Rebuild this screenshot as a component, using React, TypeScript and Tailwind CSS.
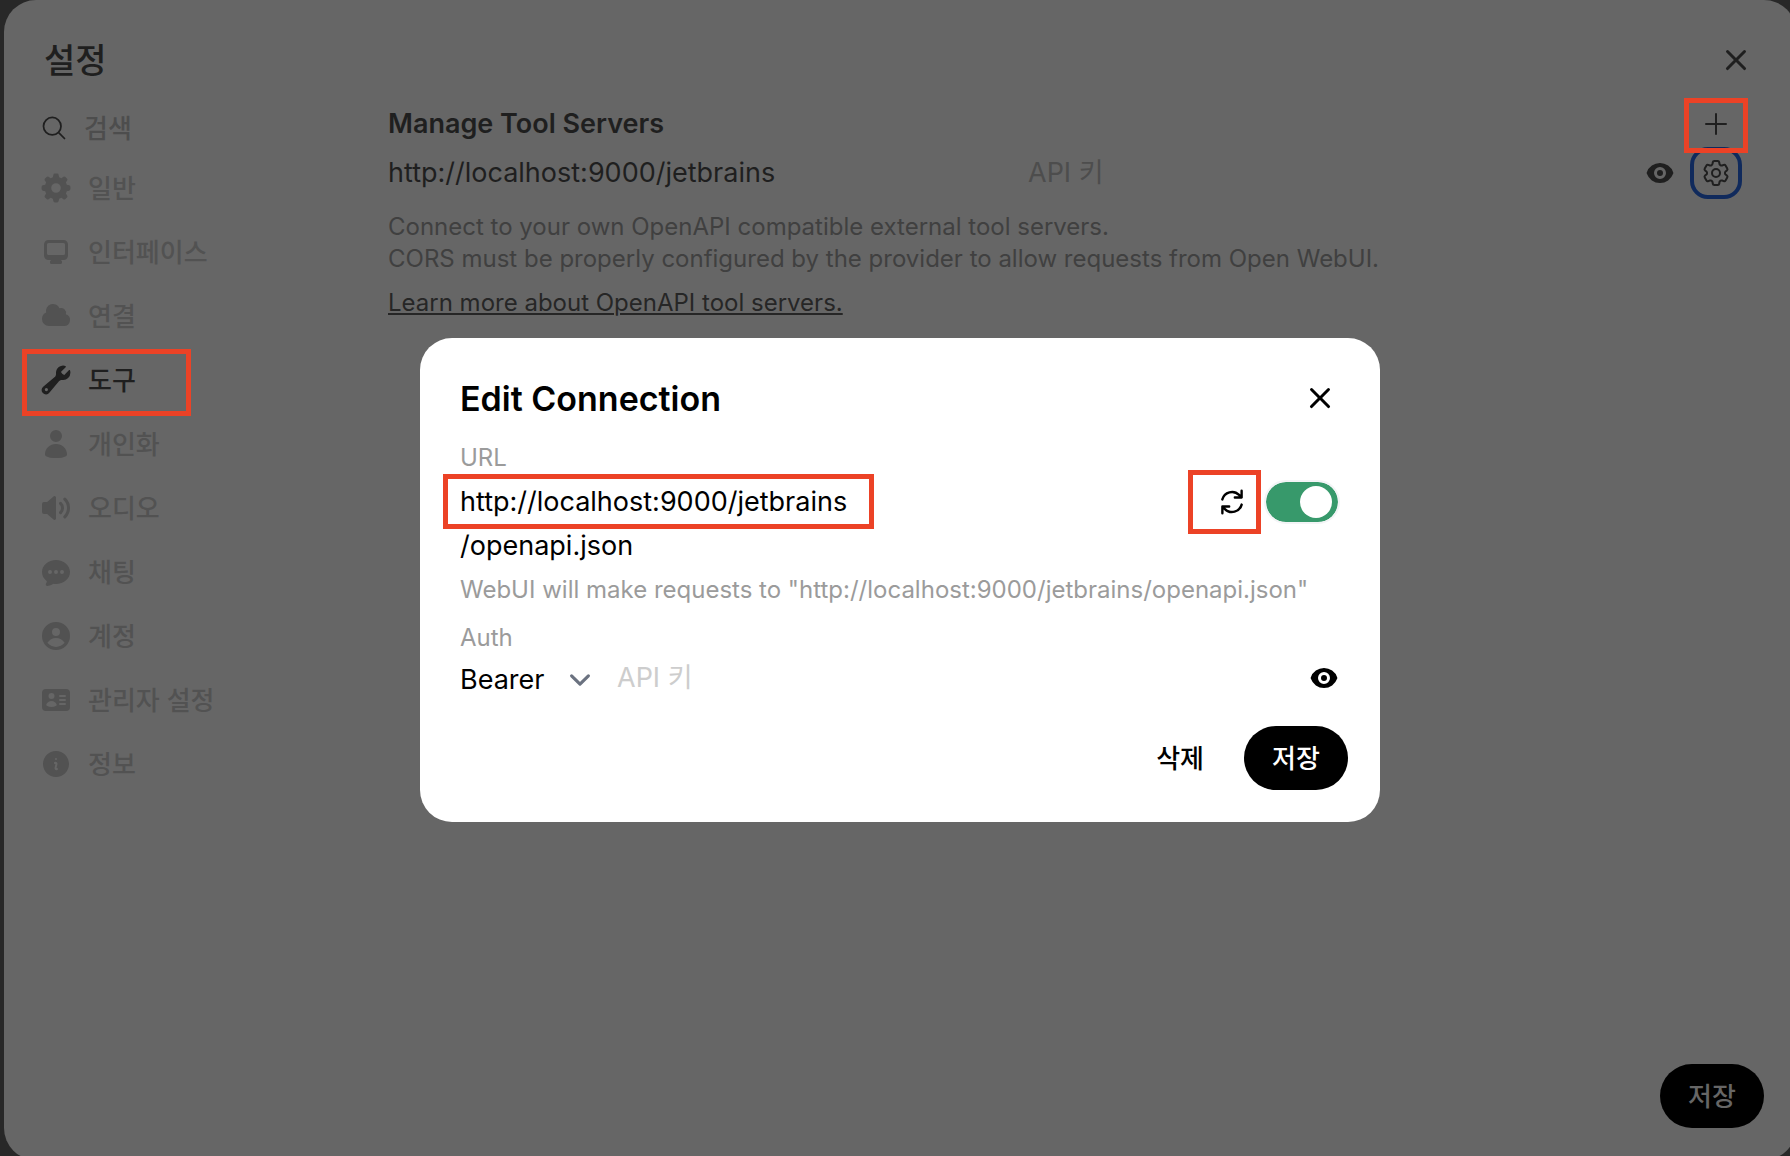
import React, { useState } from 'react';
import {
  HiIdentification,
  HiInformationCircle,
  HiMiniArrowPath,
  HiMiniCog8Tooth,
  HiMiniWrench,
  HiMiniXMark,
  HiOutlineCog6Tooth,
  HiOutlineMagnifyingGlass,
  HiOutlinePlus,
} from 'react-icons/hi2';

const ICONS = {
  interface:
    'M2 4.25A2.25 2.25 0 0 1 4.25 2h7.5A2.25 2.25 0 0 1 14 4.25v5.5A2.25 2.25 0 0 1 11.75 12h-1.312c.1.128.21.248.328.36a.75.75 0 0 1 .234.545v.345a.75.75 0 0 1-.75.75h-4.5a.75.75 0 0 1-.75-.75v-.345a.75.75 0 0 1 .234-.545c.118-.111.228-.232.328-.36H4.25A2.25 2.25 0 0 1 2 9.75v-5.5Zm2.25-.75a.75.75 0 0 0-.75.75v4.5c0 .414.336.75.75.75h7.5a.75.75 0 0 0 .75-.75v-4.5a.75.75 0 0 0-.75-.75h-7.5Z',
  cloud:
    'M1 9.5A3.5 3.5 0 0 0 4.5 13H12a3 3 0 0 0 .917-5.857 2.503 2.503 0 0 0-3.198-3.019 3.5 3.5 0 0 0-6.628 2.171A3.5 3.5 0 0 0 1 9.5Z',
  user: 'M8 7a3 3 0 1 0 0-6 3 3 0 0 0 0 6ZM2.5 13.1C2.5 10.3 4.9 8 8 8s5.5 2.3 5.5 5.1c0 .4-.2.8-.5 1A9.9 9.9 0 0 1 8 15a9.9 9.9 0 0 1-5-.9c-.3-.2-.5-.6-.5-1Z',
  speaker:
    'M7.557 2.066A.75.75 0 0 1 8 2.75v10.5a.75.75 0 0 1-1.248.56L3.59 11H2a1 1 0 0 1-1-1V6a1 1 0 0 1 1-1h1.59l3.162-2.81a.75.75 0 0 1 .805-.124ZM12.95 3.05a.75.75 0 1 0-1.06 1.06 5.5 5.5 0 0 1 0 7.78.75.75 0 1 0 1.06 1.06 7 7 0 0 0 0-9.9ZM10.828 5.172a.75.75 0 1 0-1.06 1.06 2.5 2.5 0 0 1 0 3.536.75.75 0 1 0 1.06 1.06 4 4 0 0 0 0-5.656Z',
  chat: 'M8 2C4.262 2 1 4.57 1 8c0 1.86.98 3.486 2.455 4.566a3.472 3.472 0 0 1-.469 1.26.75.75 0 0 0 .713 1.14 6.961 6.961 0 0 0 3.06-1.06c.403.062.818.094 1.241.094 3.738 0 7-2.57 7-6s-3.262-6-7-6ZM5 9a1 1 0 1 0 0-2 1 1 0 0 0 0 2Zm7-1a1 1 0 1 1-2 0 1 1 0 0 1 2 0ZM8 9a1 1 0 1 0 0-2 1 1 0 0 0 0 2Z',
  account:
    'M15 8A7 7 0 1 1 1 8a7 7 0 0 1 14 0Zm-5-2a2 2 0 1 1-4 0 2 2 0 0 1 4 0ZM8 9c-1.825 0-3.422.977-4.295 2.437A5.49 5.49 0 0 0 8 13.5a5.49 5.49 0 0 0 4.294-2.063A4.997 4.997 0 0 0 8 9Z',
  eye: 'M8 9.5a1.5 1.5 0 1 0 0-3 1.5 1.5 0 0 0 0 3ZM1.38 8.28a.87.87 0 0 1 0-.566 7.003 7.003 0 0 1 13.238.006.87.87 0 0 1 0 .566A7.003 7.003 0 0 1 1.379 8.28ZM11 8a3 3 0 1 1-6 0 3 3 0 0 1 6 0Z',
};

function SolidIcon({ name }: { name: keyof typeof ICONS }) {
  return (
    <svg viewBox="0 0 16 16" fill="currentColor" className="size-8" aria-hidden="true">
      <path fillRule="evenodd" clipRule="evenodd" d={ICONS[name]} />
    </svg>
  );
}

const TABS = [
  { id: 'general', label: '일반', icon: <HiMiniCog8Tooth className="size-8" /> },
  { id: 'interface', label: '인터페이스', icon: <SolidIcon name="interface" /> },
  { id: 'connections', label: '연결', icon: <SolidIcon name="cloud" /> },
  { id: 'tools', label: '도구', icon: <HiMiniWrench className="size-8" /> },
  { id: 'personalization', label: '개인화', icon: <SolidIcon name="user" /> },
  { id: 'audio', label: '오디오', icon: <SolidIcon name="speaker" /> },
  { id: 'chats', label: '채팅', icon: <SolidIcon name="chat" /> },
  { id: 'account', label: '계정', icon: <SolidIcon name="account" /> },
  { id: 'admin', label: '관리자 설정', icon: <HiIdentification className="size-8" /> },
  { id: 'about', label: '정보', icon: <HiInformationCircle className="size-8" /> },
];

// Red frame drawn over a control that the guide points at
function Highlight({ className }: { className: string }) {
  return <span className={`pointer-events-none absolute z-10 border-5 border-[#ec4226] ${className}`} />;
}

function Sidebar() {
  const [activeTab, setActiveTab] = useState('tools');

  return (
    <nav className="w-[344px] shrink-0 pl-9">
      <label className="flex h-14 items-center gap-4">
        <HiOutlineMagnifyingGlass className="size-7" />
        <input
          type="search"
          aria-label="검색"
          placeholder="검색"
          className="w-48 bg-transparent text-[26px] font-medium outline-none placeholder:text-[#4d4d4d]"
        />
      </label>
      {TABS.map(tab => (
        <button
          key={tab.id}
          onClick={() => setActiveTab(tab.id)}
          className={`relative flex h-16 items-center gap-4 text-[26px] font-medium ${
            activeTab === tab.id ? 'text-[#1f1f1f]' : 'text-[#525252]'
          }`}
        >
          {tab.icon}
          {tab.label}
          {tab.id === 'tools' && <Highlight className="top-px -left-[18px] h-[67px] w-[169px]" />}
        </button>
      ))}
    </nav>
  );
}

function ToolServers() {
  const [url, setUrl] = useState('http://localhost:9000/jetbrains');

  return (
    <section className="min-w-0 flex-1 pr-[54px]">
      <div className="flex h-12 items-center justify-between">
        <h2 className="text-[27px] font-semibold">Manage Tool Servers</h2>
        <button aria-label="Add connection" className="relative flex size-[52px] items-center justify-center">
          <HiOutlinePlus className="size-8" />
          <Highlight className="top-0 -left-1.5 h-[55px] w-16" />
        </button>
      </div>
      <div className="flex h-[50px] items-center">
        <input
          aria-label="URL"
          value={url}
          onChange={e => setUrl(e.target.value)}
          className="min-w-0 flex-1 bg-transparent text-[27px] outline-none"
        />
        <input
          type="password"
          aria-label="API 키"
          placeholder="API 키"
          className="min-w-0 flex-1 bg-transparent pl-6 text-[27px] outline-none placeholder:text-[#4d4d4d]"
        />
        <button aria-label="Show key">
          <SolidIcon name="eye" />
        </button>
        <button
          aria-label="Configure"
          className="ml-3.5 flex size-[52px] items-center justify-center rounded-[18px] border-4 border-[#102a5c]"
        >
          <HiOutlineCog6Tooth className="size-8" />
        </button>
      </div>
      <p className="mt-[13px] text-[24px] leading-8 text-[#404040]">
        Connect to your own OpenAPI compatible external tool servers.
        <br />
        CORS must be properly configured by the provider to allow requests from Open WebUI.
      </p>
      <a href="#docs" className="mt-3 block w-fit text-[24px] leading-8 text-[#262626] underline">
        Learn more about OpenAPI tool servers.
      </a>
    </section>
  );
}

function EditConnection() {
  const [url, setUrl] = useState('http://localhost:9000/jetbrains');
  const [enabled, setEnabled] = useState(true);

  return (
    <div
      role="dialog"
      aria-label="Edit Connection"
      className="w-[960px] rounded-[32px] bg-white px-10 py-8 text-black"
    >
      <div className="flex h-14 items-center justify-between">
        <h2 className="text-[34px] font-semibold">Edit Connection</h2>
        <button aria-label="Close">
          <HiMiniXMark className="size-10" />
        </button>
      </div>

      <label htmlFor="server-url" className="mt-4 block text-[24px] leading-8 text-[#9b9b9b]">
        URL
      </label>
      <div className="relative flex h-14 items-center">
        <input
          id="server-url"
          value={url}
          onChange={e => setUrl(e.target.value)}
          className="min-w-0 flex-1 text-[27px] outline-none"
        />
        <Highlight className="top-0 -left-[17px] h-[55px] w-[431px]" />
        <button aria-label="Verify connection" className="relative mr-[18px]">
          <HiMiniArrowPath className="size-8" />
          <Highlight className="-top-4 -left-7 h-16 w-[73px]" />
        </button>
        <label className="mr-0.5 flex h-10 w-[72px] cursor-pointer items-center rounded-full bg-gray-200 px-1.5 outline-2 outline-gray-100 has-checked:bg-[#37996b]">
          <input
            type="checkbox"
            aria-label="Enabled"
            checked={enabled}
            onChange={e => setEnabled(e.target.checked)}
            className="peer sr-only"
          />
          <span className="size-8 rounded-full bg-white peer-checked:ml-auto" />
        </label>
      </div>
      <div className="text-[27px] leading-8">/openapi.json</div>
      <p className="mt-3 text-[24px] leading-8 text-[#9b9b9b]">
        WebUI will make requests to "{url}/openapi.json"
      </p>

      <label htmlFor="auth-type" className="mt-4 block text-[24px] leading-8 text-[#9b9b9b]">
        Auth
      </label>
      <div className="flex h-12 items-center">
        <div className="relative w-[157px] pt-1">
          <select id="auth-type" defaultValue="bearer" className="w-full appearance-none text-[27px] outline-none">
            <option value="bearer">Bearer</option>
            <option value="session">Session</option>
          </select>
          <svg
            viewBox="0 0 20 20"
            fill="none"
            stroke="#6b7280"
            strokeWidth="1.5"
            strokeLinecap="round"
            strokeLinejoin="round"
            className="pointer-events-none absolute top-1 right-4 bottom-0 my-auto size-[42px]"
          >
            <path d="m6 8 4 4 4-4" />
          </svg>
        </div>
        <input
          type="password"
          aria-label="API 키"
          placeholder="API 키"
          className="min-w-0 flex-1 text-[27px] outline-none placeholder:text-[#cdcdcd]"
        />
        <button aria-label="Show key">
          <SolidIcon name="eye" />
        </button>
      </div>

      <div className="mt-6 -mr-2 flex justify-end gap-2">
        <button className="h-16 px-8 text-[26px] font-medium">삭제</button>
        <button className="h-16 w-26 rounded-full bg-black text-[26px] font-medium text-white">저장</button>
      </div>
    </div>
  );
}

export default function App() {
  return (
    <div className="h-screen overflow-hidden bg-[#282828] font-['Inter','Noto_Sans_CJK_KR',sans-serif]">
      <main className="relative ml-1 flex min-h-[calc(100vh+4px)] w-[calc(100%+2px)] flex-col rounded-[32px] bg-[#666] pt-9 text-[#1f1f1f]">
        <header className="flex h-12 items-center justify-between px-10">
          <h1 className="text-[34px] font-medium">설정</h1>
          <button aria-label="Close settings">
            <HiMiniXMark className="size-10" />
          </button>
        </header>
        <div className="mt-4 flex gap-10">
          <Sidebar />
          <ToolServers />
        </div>
        <div className="mt-auto flex justify-end p-8">
          <button className="h-16 w-26 rounded-full bg-black text-[26px] font-medium text-[#666]">저장</button>
        </div>
        <div className="absolute inset-0 flex items-center justify-center">
          <EditConnection />
        </div>
      </main>
    </div>
  );
}
